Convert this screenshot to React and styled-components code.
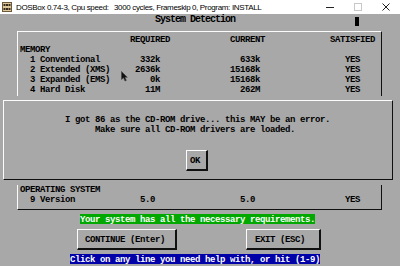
import React from 'react';
import styled, { createGlobalStyle } from 'styled-components';

const Global = createGlobalStyle`
  html, body { margin: 0; padding: 0; background: #ffffff; }
  body { width: 400px; height: 266px; overflow: hidden; }
`;

const DOS_GRAY = '#a8a8a8';
const HI = '#fcfcfc';
const LO = '#101010';

const Window = styled.div`
  width: 400px;
  height: 266px;
  display: flex;
  flex-direction: column;
  background: #ffffff;
`;

const TitleBar = styled.div`
  height: 14px;
  display: flex;
  align-items: center;
  background: #ffffff;
  font-family: "Liberation Sans", "Noto Sans", Arial, sans-serif;
  font-size: 8px;
  letter-spacing: -0.35px;
  color: #000000;
`;

const IconBox = styled.div`
  width: 10px;
  height: 10px;
  margin-left: 2px;
  margin-right: 4px;
  display: flex;
`;

const TitleSeg = styled.span`
  min-width: ${p => (p.$w ? `${p.$w}px` : 'auto')};
  flex: none;
  white-space: pre;
`;

const Spacer = styled.div`
  flex: 1;
`;

const Ctrl = styled.div`
  width: 28px;
  height: 14px;
  display: flex;
  align-items: center;
  justify-content: center;
`;

const Screen = styled.div`
  position: relative;
  height: 252px;
  background: ${DOS_GRAY};
  font-family: "Liberation Mono", "DejaVu Sans Mono", monospace;
  font-size: 9px;
  font-weight: bold;
  letter-spacing: -0.4px;
  color: #000000;
  white-space: pre;
  display: flex;
  flex-direction: column;
  overflow: hidden;
`;

const TitleRow = styled.div`
  height: 10px;
  line-height: 13px;
  display: flex;
  padding-left: 155px;
`;

const TitleText = styled.span`
  font-size: 10px;
  letter-spacing: -1px;
  line-height: 12px;
`;

const BlockCursor = styled.span`
  width: 4px;
  height: 9px;
  margin-left: 120px;
  margin-top: 3px;
  background: #000000;
`;

const Frame = styled.div`
  margin-top: 7px;
  margin-left: 17px;
  width: 365px;
  box-sizing: border-box;
  border-style: solid;
  border-width: 1px;
  border-color: ${HI} ${LO} ${LO} ${HI};
  padding: 2px 0 5px 2px;
  display: flex;
  flex-direction: column;
`;

const Line = styled.div`
  height: 10px;
  line-height: 13px;
  padding-left: ${p => p.$pad || 0}px;
`;

const StatusRow = styled.div`
  height: 10px;
  margin-top: ${p => p.$top}px;
  padding-left: ${p => p.$pad}px;
  display: flex;
`;

const Strip = styled.span`
  height: 10px;
  line-height: 13px;
  background: ${p => p.$bg};
  color: #fcfcfc;
`;

const ButtonRow = styled.div`
  margin-top: 5px;
  padding-left: 77px;
  display: flex;
`;

const DosButton = styled.div`
  margin-left: ${p => p.$ml || 0}px;
  border-style: solid;
  border-width: 1px 2px 2px 1px;
  border-color: ${HI} ${LO} ${LO} ${HI};
  padding: 4px ${p => p.$pr}px 4px ${p => p.$pl}px;
  height: 10px;
  line-height: 13px;
`;

const Overlay = styled.div`
  position: absolute;
  top: 82px;
  left: 0;
  width: 400px;
  height: 89px;
  box-sizing: border-box;
  background: ${DOS_GRAY};
  padding: 4px 0 0 3px;
`;

const Dialog = styled.div`
  width: 390px;
  height: 80px;
  box-sizing: border-box;
  border-style: solid;
  border-width: 1px;
  border-color: ${HI} ${LO} ${LO} ${HI};
  padding-top: 13px;
  display: flex;
  flex-direction: column;
`;

const DialogButtons = styled.div`
  margin-top: 16px;
  padding-left: 182px;
  display: flex;
`;

const Pointer = styled.svg`
  position: absolute;
  left: 121px;
  top: 57px;
`;

const pad = (base, ...parts) => {
  let s = '';
  for (const [col, text] of parts) {
    const pos = col - base;
    while (s.length < pos) s += ' ';
    s += text;
  }
  return s;
};

const boxRows = [
  pad(4, [26, 'REQUIRED'], [46, 'CURRENT'], [66, 'SATISFIED']),
  'MEMORY',
  pad(4, [6, '1 Conventional'], [28, '332k'], [48, '633k'], [69, 'YES']),
  pad(4, [6, '2 Extended (XMS)'], [27, '2636k'], [46, '15168k'], [69, 'YES']),
  pad(4, [6, '3 Expanded (EMS)'], [30, '0k'], [46, '15168k'], [69, 'YES']),
  pad(4, [6, '4 Hard Disk'], [29, '11M'], [48, '262M'], [69, 'YES']),
  '', '', '', '', '', '', '', '', '',
  'OPERATING SYSTEM',
  pad(4, [6, '9 Version'], [28, '5.0'], [48, '5.0'], [69, 'YES']),
];

const DosIcon = () => (
  <svg width="10" height="10" viewBox="0 0 10 10">
    <rect x="0" y="0" width="10" height="10" fill="#d9c79a" />
    <rect x="0.5" y="0.5" width="9" height="9" fill="none" stroke="#6b5a3a" strokeWidth="1" />
    <rect x="1.5" y="2" width="2" height="2" fill="#3a2a1a" />
    <rect x="4" y="2" width="2" height="2" fill="#3a2a1a" />
    <rect x="6.5" y="2" width="2" height="2" fill="#3a2a1a" />
    <rect x="1.5" y="6" width="2" height="2" fill="#3a2a1a" />
    <rect x="4" y="6" width="2" height="2" fill="#3a2a1a" />
    <rect x="6.5" y="6" width="2" height="2" fill="#3a2a1a" />
  </svg>
);

export default function App() {
  return (
    <>
      <Global />
      <Window>
        <TitleBar>
          <IconBox><DosIcon /></IconBox>
          <TitleSeg $w={98}>DOSBox 0.74-3, Cpu speed:</TitleSeg>
          <TitleSeg $w={78}>3000 cycles, Frameskip</TitleSeg>
          <TitleSeg $w={40}>0, Program:</TitleSeg>
          <TitleSeg>INSTALL</TitleSeg>
          <Spacer />
          <Ctrl>
            <svg width="8" height="8" viewBox="0 0 8 8">
              <line x1="0" y1="4.5" x2="8" y2="4.5" stroke="#222" strokeWidth="1" />
            </svg>
          </Ctrl>
          <Ctrl>
            <svg width="8" height="8" viewBox="0 0 8 8">
              <rect x="0.5" y="0.5" width="7" height="7" fill="none" stroke="#c8c8c8" strokeWidth="1" />
            </svg>
          </Ctrl>
          <Ctrl>
            <svg width="8" height="8" viewBox="0 0 8 8">
              <path d="M0.5 0.5 L7.5 7.5 M7.5 0.5 L0.5 7.5" stroke="#222" strokeWidth="1" />
            </svg>
          </Ctrl>
        </TitleBar>
        <Screen>
          <TitleRow>
            <TitleText>System Detection</TitleText>
            <BlockCursor />
          </TitleRow>
          <Frame>
            {boxRows.map((r, i) => (
              <Line key={i}>{r}</Line>
            ))}
          </Frame>
          <StatusRow $top={4} $pad={80}>
            <Strip $bg="#00a800">Your system has all the necessary requirements.</Strip>
          </StatusRow>
          <ButtonRow>
            <DosButton $pl={7} $pr={10}>CONTINUE (Enter)</DosButton>
            <DosButton $ml={69} $pl={8} $pr={14}>EXIT (ESC)</DosButton>
          </ButtonRow>
          <StatusRow $top={4} $pad={70}>
            <Strip $bg="#0000a8">Click on any line you need help with, or hit (1-9)</Strip>
          </StatusRow>
          <Overlay>
            <Dialog>
              <Line $pad={61}>I got 86 as the CD-ROM drive... this MAY be an error.</Line>
              <Line $pad={61}>{'      Make sure all CD-ROM drivers are loaded.'}</Line>
              <DialogButtons>
                <DosButton $pl={3} $pr={6}>OK</DosButton>
              </DialogButtons>
            </Dialog>
          </Overlay>
          <Pointer width="7" height="11" viewBox="0 0 7 11">
            <path d="M0.5 0.5 L0.5 8.5 L2.5 6.8 L4 10 L5.3 9.4 L3.9 6.3 L6.3 6.3 Z" fill="#111" stroke="#444" strokeWidth="0.6" />
          </Pointer>
        </Screen>
      </Window>
    </>
  );
}
